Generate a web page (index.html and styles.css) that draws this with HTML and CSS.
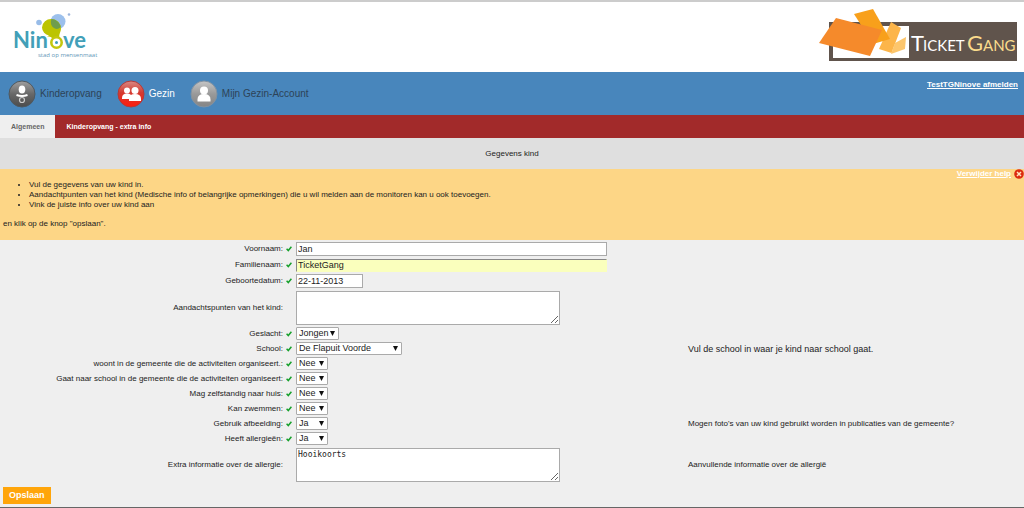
FILE: index.html
```html
<!DOCTYPE html>
<html lang="nl">
<head>
<meta charset="utf-8">
<title>Ticket Gang - Gezin</title>
<link rel="stylesheet" href="styles.css">
</head>
<body>
<svg class="defs" aria-hidden="true">
  <defs>
    <linearGradient id="dark" x1="0" y1="0" x2="0" y2="1"><stop offset="0" stop-color="#a0a0a0"/><stop offset=".5" stop-color="#686868"/><stop offset="1" stop-color="#4c4c4c"/></linearGradient>
    <linearGradient id="red" x1="0" y1="0" x2="0" y2="1"><stop offset="0" stop-color="#d98a84"/><stop offset=".45" stop-color="#d43a30"/><stop offset="1" stop-color="#ff1c0c"/></linearGradient>
    <linearGradient id="grey" x1="0" y1="0" x2="0" y2="1"><stop offset="0" stop-color="#c6c6c6"/><stop offset=".5" stop-color="#999"/><stop offset="1" stop-color="#858585"/></linearGradient>
    <symbol id="tick" viewBox="0 0 6 6"><path d="M.6 2.700 2.300 4.500 5.400 .8" fill="none" stroke="#17a02c" stroke-width="1.500"/></symbol>
  </defs>
</svg>
<header class="brand">
  <svg class="ninove" viewBox="0 0 100 60" role="img" aria-label="Ninove, stad op mensenmaat">
    <circle cx="37" cy="15.500" r="2.800" fill="#98bce8"/>
    <circle cx="67" cy="7.500" r="1.300" fill="#9eb6dc"/>
    <circle cx="56" cy="14.500" r="7.500" fill="#9cc0ec"/>
    <path d="M49.500 12a9.500 9.500 0 0 1 9.500 9.500c0 4-2.500 5-1.500 10l-5 4-3-5c-1-1-2-1-4.500-1l2-1A8.500 8.500 0 0 1 40 20.500 9 9 0 0 1 49.500 12z" fill="#bcc400"/>
    <path d="M49.500 12c4 0 8 3 9.300 8-4 4-8.500 1-9.600-2.500-.5-2-.5-4 .3-5.500z" fill="#6f9d4d"/>
    <text y="41" class="ninove-name"><tspan x="11">Nin</tspan><tspan x="61">ve</tspan></text>
    <circle cx="54.500" cy="35.500" r="5.200" fill="#fff" stroke="#c3c60c" stroke-width="2.600"/>
    <circle cx="54.500" cy="35.500" r="1.500" fill="#3f9cb4"/>
    <text x="36" y="50" class="ninove-sub">stad op mensenmaat</text>
  </svg>
  <svg class="ticketgang" viewBox="0 0 200 56" role="img" aria-label="Ticket Gang">
    <path d="M10 15h188v39H10z" fill="#60544c"/>
    <path d="M14 19h76v32H14z" fill="#fff"/>
    <path d="m72 15 10 6-9.500 25L60 42z" fill="#fcb54a"/>
    <path d="m87 30-1 12-14 5 4-11z" fill="#fdc66c"/>
    <path d="M35 7 54 2l17 30-17 5z" fill="#f8a01b"/>
    <path d="M17 11 63 23 51 49 0 36z" fill="#f58a2b"/>
    <text y="44" class="tg-text"><tspan x="92" class="tg-cap">T</tspan><tspan x="104">ICKET</tspan><tspan x="148" class="tg-cap tg-gold">G</tspan><tspan x="164" class="tg-gold">ANG</tspan></text>
  </svg>
</header>
<nav class="mainnav">
  <a class="item" href="#">
    <svg class="orb" viewBox="0 0 28 28" aria-hidden="true"><circle cx="14" cy="14" r="13" fill="url(#dark)" stroke="#4e5860"/><ellipse cx="14" cy="9.500" rx="3.300" ry="4" fill="#fff"/><path d="M8.500 15q5.500 2 11 0" fill="none" stroke="#fff" stroke-width="2"/><circle cx="14" cy="20" r="2.500" fill="none" stroke="#ccc" stroke-width="1.200"/></svg>
    <span>Kinderopvang</span></a>
  <a class="item current" href="#">
    <svg class="orb" viewBox="0 0 28 28" aria-hidden="true"><circle cx="14" cy="14" r="13" fill="url(#red)" stroke="#b23a3a"/><g fill="#fff"><circle cx="10" cy="10.500" r="3"/><path d="M5 19v-1q0-4.500 5-4.500t5 4.500v1z"/><circle cx="18" cy="10.500" r="3.500"/><path d="M12 21v-2q0-5 6-5t6 5v2z"/></g></svg>
    <span>Gezin</span></a>
  <a class="item" href="#">
    <svg class="orb" viewBox="0 0 28 28" aria-hidden="true"><circle cx="14" cy="14" r="13" fill="url(#grey)" stroke="#8192a2"/><circle cx="14" cy="10.500" r="4" fill="#fff"/><path d="M7.500 21.500v-2q0-5.500 6.500-5.500t6.500 5.500v2z" fill="#fff"/></svg>
    <span>Mijn Gezin-Account</span></a>
  <a class="logout" href="#">TestTGNinove afmelden</a>
</nav>
<nav class="tabs">
  <a class="tab active" href="#">Algemeen</a>
  <a class="tab" href="#">Kinderopvang - extra info</a>
</nav>
<h1 class="title">Gegevens kind</h1>
<section class="help">
  <div class="help-text">
    <ul>
      <li>Vul de gegevens van uw kind in.</li>
      <li>Aandachtpunten van het kind (Medische info of belangrijke opmerkingen) die u wil melden aan de monitoren kan u ook toevoegen.</li>
      <li>Vink de juiste info over uw kind aan</li>
    </ul>
    <p>en klik op de knop "opslaan".</p>
  </div>
  <a class="dismiss" href="#">Verwijder help
    <svg viewBox="0 0 10 10" aria-hidden="true"><circle cx="5" cy="5" r="4.800" fill="#dc2a10"/><path d="m3 3 4 4m0-4L3 7" stroke="#ffe6c0" stroke-width="1.500"/></svg></a>
</section>
<form class="form">
  <div class="row text-row"><label for="voornaam">Voornaam:</label><svg class="tick"><use href="#tick"/></svg><input id="voornaam" class="wide" type="text" value="Jan"></div>
  <div class="row text-row"><label for="familienaam">Familienaam:</label><svg class="tick"><use href="#tick"/></svg><input id="familienaam" class="wide filled" type="text" value="TicketGang"></div>
  <div class="row text-row"><label for="geboorte">Geboortedatum:</label><svg class="tick"><use href="#tick"/></svg><input id="geboorte" class="date" type="text" value="22-11-2013"></div>
  <div class="row area-row"><label for="aandacht">Aandachtspunten van het kind:</label><span></span><textarea id="aandacht"></textarea></div>
  <div class="row"><label for="geslacht">Geslacht:</label><svg class="tick"><use href="#tick"/></svg><select id="geslacht" class="medium"><option>Jongen</option></select></div>
  <div class="row"><label for="school">School:</label><svg class="tick"><use href="#tick"/></svg><select id="school" class="long"><option>De Flapuit Voorde</option></select><span class="hint large">Vul de school in waar je kind naar school gaat.</span></div>
  <div class="row"><label for="woont">woont in de gemeente die de activiteiten organiseert.:</label><svg class="tick"><use href="#tick"/></svg><select id="woont"><option>Nee</option></select></div>
  <div class="row"><label for="naarschool">Gaat naar school in de gemeente die de activiteiten organiseert:</label><svg class="tick"><use href="#tick"/></svg><select id="naarschool"><option>Nee</option></select></div>
  <div class="row"><label for="naarhuis">Mag zelfstandig naar huis:</label><svg class="tick"><use href="#tick"/></svg><select id="naarhuis"><option>Nee</option></select></div>
  <div class="row"><label for="zwemmen">Kan zwemmen:</label><svg class="tick"><use href="#tick"/></svg><select id="zwemmen"><option>Nee</option></select></div>
  <div class="row"><label for="afbeelding">Gebruik afbeelding:</label><svg class="tick"><use href="#tick"/></svg><select id="afbeelding"><option>Ja</option></select><span class="hint">Mogen foto's van uw kind gebruikt worden in publicaties van de gemeente?</span></div>
  <div class="row"><label for="allergie">Heeft allergieën:</label><svg class="tick"><use href="#tick"/></svg><select id="allergie"><option>Ja</option></select></div>
  <div class="row area-row"><label for="extra">Extra informatie over de allergie:</label><span></span><textarea id="extra">Hooikoorts</textarea><span class="hint">Aanvullende informatie over de allergië</span></div>
  <button class="save" type="submit">Opslaan</button>
</form>
</body>
</html>
```
FILE: styles.css
```css
* { box-sizing: border-box; }
body {
  margin: 0;
  min-height: 100vh;
  display: flex;
  flex-direction: column;
  background: #efefef;
  border-bottom: 1px solid #666;
  color: #222;
  font: 8px/10px "Liberation Sans", Arial, sans-serif;
}
.defs { position: absolute; width: 0; height: 0; }
.brand {
  display: flex;
  justify-content: space-between;
  align-items: flex-start;
  height: 72px;
  padding: 5px 5px 0 2px;
  background: #fff;
  border-top: 2px solid #ccc;
}
.ninove { width: 100px; height: 60px; }
.ninove-name { font: bold 22px Lato, sans-serif; fill: #429fb8; }
.ninove-sub { font: 6px "Open Sans", sans-serif; fill: #5f97b8; }
.ticketgang { width: 200px; height: 56px; }
.tg-text { font: 15px Lato, sans-serif; fill: #fff; }
.tg-cap { font-size: 22px; }
.tg-gold { fill: #fbdc8c; }
.mainnav {
  display: flex;
  align-items: center;
  gap: 15px;
  height: 43px;
  padding: 0 6px 0 8px;
  background: #4886bc;
}
.item {
  display: flex;
  align-items: center;
  gap: 4px;
  color: #2d4357;
  font-size: 10px;
  line-height: 12px;
  text-decoration: none;
}
.item.current { color: #fff; }
.orb { width: 28px; height: 28px; }
.logout {
  align-self: flex-start;
  margin: 8px 0 0 auto;
  color: #fff;
  font-weight: bold;
}
.tabs { display: flex; height: 23px; background: #a22a2a; }
.tab {
  display: flex;
  align-items: center;
  padding: 0 11px;
  color: #fff;
  font-size: 7px;
  font-weight: bold;
  text-decoration: none;
}
.tab.active { background: #efefef; color: #666; }
.title {
  margin: 0;
  padding: 11px 0 10px;
  background: #dfdfdf;
  font-size: 8px;
  font-weight: normal;
  text-align: center;
}
.help {
  display: flex;
  justify-content: space-between;
  align-items: flex-start;
  height: 71px;
  padding-left: 3px;
  background: #fdd686;
}
.help ul { margin: 11px 0 9px; padding-left: 26px; }
.help p { margin: 0; }
.dismiss { display: flex; align-items: center; gap: 3px; color: #fff; text-decoration: underline; font-weight: bold; }
.dismiss svg { width: 10px; height: 10px; }
.form { padding-top: 1px; }
.row {
  display: grid;
  grid-template-columns: 283fr 13px 392fr 336fr;
  align-items: center;
  height: 15px;
}
.row label { text-align: right; }
.tick { width: 6px; height: 6px; margin-left: 3px; }
.text-row { height: 16px; }
.area-row { height: 37px; }
input, select, textarea {
  margin: 0;
  border: 1px solid #aaa;
  border-radius: 0;
  background: #fff;
  color: #222;
  font: 9px/11px "Liberation Sans", Arial, sans-serif;
}
input { height: 14px; padding: 0 1px; }
.wide { width: 311px; max-width: 100%; }
.filled { height: 13px; background: #faffbd; border-color: #888 #faffbd #faffbd #888; }
.date { width: 67px; }
select {
  appearance: none;
  justify-self: start;
  width: 32px;
  height: 13px;
  padding: 0 2px;
  border-radius: 1px;
  background: #fff url("data:image/svg+xml,%3Csvg xmlns='http://www.w3.org/2000/svg' viewBox='0 0 5 5'%3E%3Cpath d='M0 0h5L2.500 5z' fill='%23111'/%3E%3C/svg%3E") no-repeat right 3px center / 5px 5px;
}
.medium { width: 43px; }
.long { width: 106px; }
textarea {
  width: 264px;
  max-width: 100%;
  height: 34px;
  padding: 1px;
  font: 8px/10px "DejaVu Sans Mono", monospace;
}
.large { font-size: 9px; }
.save {
  display: block;
  height: 17px;
  margin: 4px 3px 3px;
  padding: 0 6px;
  border: 0;
  background: #ffa50a;
  color: #fff;
  font: bold 9px/11px "Liberation Sans", Arial, sans-serif;
}
```
